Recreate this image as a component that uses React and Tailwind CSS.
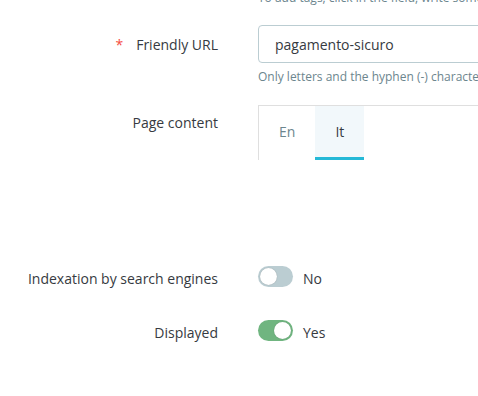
export default function App() {
  return (
    <div className="w-[478px] h-[396px] overflow-hidden bg-white font-['Open_Sans',_sans-serif] text-[14px] text-[#363a41]">
      {/* cut-off help text */}
      <div className="grid grid-cols-[218px_1fr] gap-x-10 mt-[-11px]">
        <div />
        <div className="whitespace-nowrap text-[12px] leading-[18px] text-[#6c868e]">
          To add tags, click in the field, write something, and then press the "Enter" key.
        </div>
      </div>

      {/* Friendly URL */}
      <div className="grid grid-cols-[218px_1fr] gap-x-10 mt-[18px]">
        <div className="flex h-[38px] items-center justify-end">
          <span className="mr-[13px] text-[#f54c3e]">*</span>
          <span>Friendly URL</span>
        </div>
        <div className="min-w-0">
          <div className="flex h-[38px] w-[260px] items-center whitespace-nowrap rounded-[4px] border border-[#bbcdd2] pl-4 text-[#363a41]">
            pagamento-sicuro
          </div>
          <div className="mt-[5px] whitespace-nowrap text-[12px] leading-[18px] text-[#6c868e]">
            Only letters and the hyphen (-) character are allowed.
          </div>
        </div>
      </div>

      {/* Page content */}
      <div className="grid grid-cols-[218px_1fr] gap-x-10 mt-[19px]">
        <div className="pt-[8px] text-right leading-[20px]">Page content</div>
        <div className="min-w-0">
          <div className="flex w-[260px] border-l border-t border-[#dfdfdf]">
            <div className="flex h-[54px] items-center border-b-[3px] border-transparent px-5 text-[#6c868e]">
              En
            </div>
            <div className="flex h-[54px] items-center border-b-[3px] border-[#25b9d7] bg-[#f2f8fb] px-5 text-[#363a41]">
              It
            </div>
          </div>
        </div>
      </div>

      {/* Indexation */}
      <div className="grid grid-cols-[218px_1fr] gap-x-10 mt-[106px]">
        <div className="flex h-[21px] items-center justify-end whitespace-nowrap pt-[3px]">
          Indexation by search engines
        </div>
        <div className="flex h-[21px] items-center">
          <div className="relative h-[21px] w-[35px] rounded-full bg-[#bbcdd2]">
            <div className="absolute left-[2px] top-[2px] h-[17px] w-[17px] rounded-full bg-white shadow-[0_0_1px_rgba(0,0,0,0.3)]" />
          </div>
          <span className="ml-[10px] pt-[3px]">No</span>
        </div>
      </div>

      {/* Displayed */}
      <div className="grid grid-cols-[218px_1fr] gap-x-10 mt-[33px]">
        <div className="flex h-[21px] items-center justify-end pt-[3px]">Displayed</div>
        <div className="flex h-[21px] items-center">
          <div className="relative h-[21px] w-[35px] rounded-full bg-[#70b580]">
            <div className="absolute right-[2px] top-[2px] h-[17px] w-[17px] rounded-full bg-white shadow-[0_0_1px_rgba(0,0,0,0.3)]" />
          </div>
          <span className="ml-[10px] pt-[3px]">Yes</span>
        </div>
      </div>
    </div>
  );
}
